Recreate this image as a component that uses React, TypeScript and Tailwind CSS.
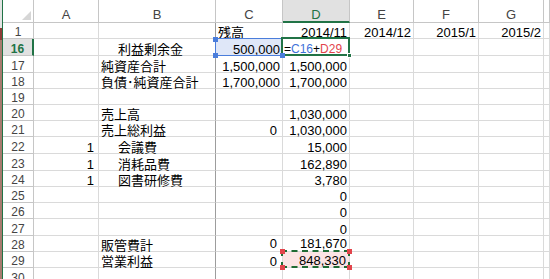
import * as React from 'react';

type Row = {
  num: string;
  tall?: boolean;
  lift?: boolean;
  a?: string;
  b?: string;
  indent?: boolean;
  c?: string;
  cLeft?: boolean;
  d?: string;
  e?: string;
  f?: string;
  g?: string;
};

const rows: Row[] = [
  { num: '1', c: '残高', cLeft: true, d: '2014/11', e: '2014/12', f: '2015/1', g: '2015/2' },
  { num: '16', tall: true },
  { num: '17', tall: true, b: '純資産合計', c: '1,500,000', d: '1,500,000' },
  { num: '18', b: '負債･純資産合計', c: '1,700,000', d: '1,700,000' },
  { num: '19' },
  { num: '20', b: '売上高', d: '1,030,000' },
  { num: '21', b: '売上総利益', c: '0', d: '1,030,000' },
  { num: '22', tall: true, a: '1', b: '会議費', indent: true, d: '15,000' },
  { num: '23', tall: true, a: '1', b: '消耗品費', indent: true, d: '162,890' },
  { num: '24', a: '1', b: '図書研修費', indent: true, d: '3,780' },
  { num: '25', d: '0' },
  { num: '26', d: '0' },
  { num: '27', tall: true, d: '0' },
  { num: '28', lift: true, b: '販管費計', c: '0', d: '181,670' },
  { num: '29' },
  { num: '30', tall: true },
];

const grid =
  'grid grid-cols-[31px_65px_117px_67px_67px_64px_65px_65px_1fr]';
const cell =
  'relative flex items-end border-r border-b border-[#dadada] whitespace-nowrap text-[13px] leading-[11px] text-black';

const Cell = ({
  children,
  right,
  className = '',
}: {
  children?: React.ReactNode;
  right?: boolean;
  className?: string;
}) => (
  <div className={`${cell} ${right ? 'justify-end pr-[2px]' : 'pl-[2px]'} ${className}`}>
    <span>{children}</span>
  </div>
);

const Square = ({ className }: { className: string }) => (
  <div className={`absolute z-20 h-[5px] w-[5px] ${className}`} />
);

const ColHeader = ({ label, active }: { label: string; active?: boolean }) => (
  <div
    className={
      active
        ? 'flex items-end justify-center border-r border-[#c6c6c6] border-b-2 border-b-[#217346] bg-[#e1e1e1] pb-[1px] text-[13px] leading-[11px] text-[#217346]'
        : 'flex items-end justify-center border-r border-b border-[#c6c6c6] pb-[2px] text-[13px] leading-[11px] text-[#444]'
    }
  >
    <span>{label}</span>
  </div>
);

export default function App() {
  return (
    <div className="flex h-[279px] w-[550px] overflow-hidden bg-white font-['Liberation_Sans','Noto_Sans_CJK_JP',sans-serif]">
      {/* window edge */}
      <div className="flex w-[3px] shrink-0">
        <div className="flex w-[2px] flex-col">
          <div className="h-[28px] bg-[#e4e4e4]" />
          <div className="h-[12px] bg-[#8c3b36]" />
          <div className="flex-1 bg-[#a77b6f]" />
        </div>
        <div className="w-px bg-[#217346]" />
      </div>

      <div className="flex-1">
        {/* column headers */}
        <div className={`${grid} h-[23px]`}>
          <div className="relative border-r border-b border-[#c6c6c6]">
            <svg className="absolute right-[2px] bottom-[2px]" width="9" height="9" viewBox="0 0 9 9">
              <polygon points="9,0 9,9 0,9" fill="#d6d6d6" />
            </svg>
          </div>
          <ColHeader label="A" />
          <ColHeader label="B" />
          <ColHeader label="C" />
          <ColHeader label="D" active />
          <ColHeader label="E" />
          <ColHeader label="F" />
          <ColHeader label="G" />
          <ColHeader label="" />
        </div>

        {rows.map(r => {
          const is16 = r.num === '16';
          const is29 = r.num === '29';
          const lift = r.lift ? 'pb-[2px]' : '';
          return (
            <div key={r.num} className={`${grid} ${r.tall ? 'h-[17px]' : 'h-[16px]'}`}>
              <div
                className={
                  is16
                    ? 'flex items-end justify-center border-r-2 border-b border-r-[#217346] border-b-[#c6c6c6] bg-[#e1e1e1] text-[12px] leading-[11px] font-bold text-[#217346]'
                    : 'flex items-end justify-center border-r border-b border-[#c6c6c6] text-[12px] leading-[11px] text-[#444]'
                }
              >
                <span>{r.num}</span>
              </div>

              <Cell right className="pr-[4px]">{r.a}</Cell>

              {is16 ? (
                <Cell className="border-r-[#9d9d9d] pl-[19px]">利益剰余金</Cell>
              ) : is29 ? (
                <Cell className="border-r-[#9d9d9d]">営業利益</Cell>
              ) : (
                <Cell className={`border-r-[#9d9d9d] ${r.indent ? 'pl-[19px]' : ''}`}>{r.b}</Cell>
              )}

              {is16 ? (
                <div className={`${cell} justify-end bg-[#dfe7f8] pr-[2px]`}>
                  <span>500,000</span>
                  <div className="absolute top-[-1px] left-[-1px] right-0 bottom-[-1px] border border-[#4a7ddb]" />
                  <Square className="top-[-2px] left-[-3px] bg-[#4a7ddb]" />
                  <Square className="bottom-[-3px] left-[-3px] bg-[#4a7ddb]" />
                  <Square className="bottom-[-3px] right-[-3px] bg-[#4a7ddb]" />
                </div>
              ) : is29 ? (
                <Cell right className="pr-[5px]">0</Cell>
              ) : (
                <Cell right={!r.cLeft} className={`${r.c === '0' ? 'pr-[5px]' : ''} ${lift}`}>
                  {r.c}
                </Cell>
              )}

              {is16 ? (
                <div className={`${cell} pl-[1px]`}>
                  <span className="text-[12px]">
                    =<span className="text-[#3f72d9]">C16</span>+<span className="text-[#e2444b]">D29</span>
                  </span>
                  <div className="absolute top-[-2px] left-[-2px] right-[-1px] bottom-[-1px] z-10 border-2 border-[#217346]" />
                  <div className="absolute right-[-3px] bottom-[-3px] z-10 h-[5px] w-[5px] border border-white bg-[#217346]" />
                </div>
              ) : is29 ? (
                <div className={`${cell} justify-end bg-[#fbe4e4] pr-[3px]`}>
                  <span className="pb-[1px]">848,330</span>
                  <div className="absolute top-[-2px] left-[-2px] right-[-1px] bottom-[-1px] z-10 border-2 border-dashed border-[#1f6b34]" />
                  <Square className="top-[-3px] left-[-3px] bg-[#e2444b]" />
                  <Square className="top-[-3px] right-[-3px] bg-[#e2444b]" />
                  <Square className="bottom-[-3px] left-[-3px] bg-[#e2444b]" />
                  <Square className="bottom-[-3px] right-[-3px] bg-[#e2444b]" />
                </div>
              ) : (
                <Cell right className={lift}>{r.d}</Cell>
              )}

              <Cell right>{r.e}</Cell>
              <Cell right>{r.f}</Cell>
              <Cell right>{r.g}</Cell>
              <Cell />
            </div>
          );
        })}
      </div>
    </div>
  );
}
